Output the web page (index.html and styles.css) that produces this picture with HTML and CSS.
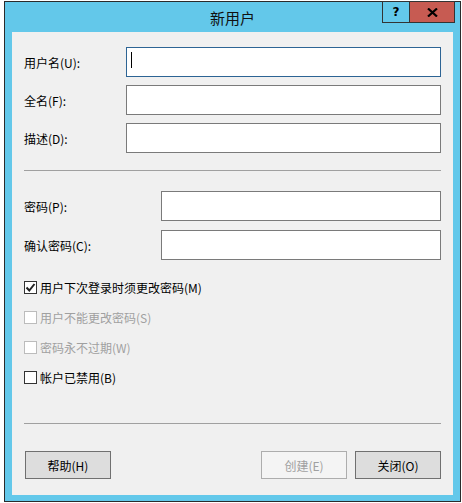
FILE: index.html
```html
<!DOCTYPE html>
<html lang="zh-CN">
<head>
<meta charset="utf-8">
<title>新用户</title>
<link rel="stylesheet" href="styles.css">
</head>
<body>
<div class="window">
  <div class="titlebar">
    <span class="title">新用户</span>
    <div class="caption-btns">
      <div class="cap-help">?</div>
      <div class="cap-close">
        <svg width="11" height="9" viewBox="0 0 11 9"><path d="M1 0.5 L10 8.5 M10 0.5 L1 8.5" stroke="#000" stroke-width="2.2"/></svg>
      </div>
    </div>
  </div>
  <div class="client">
    <div class="row"><label class="lbl">用户名(U):</label><div class="input focused"><span class="caret"></span></div></div>
    <div class="row"><label class="lbl">全名(F):</label><div class="input"></div></div>
    <div class="row"><label class="lbl">描述(D):</label><div class="input"></div></div>
    <div class="sep sep1"></div>
    <div class="row pw"><label class="lbl">密码(P):</label><div class="input"></div></div>
    <div class="row pw pw2"><label class="lbl">确认密码(C):</label><div class="input"></div></div>
    <div class="checks">
      <div class="check"><span class="box"><svg width="11" height="11" viewBox="0 0 11 11"><path d="M1.5 5.5 L4.3 8.5 L9.5 2" fill="none" stroke="#222" stroke-width="2"/></svg></span><span>用户下次登录时须更改密码(M)</span></div>
      <div class="check disabled"><span class="box"></span><span>用户不能更改密码(S)</span></div>
      <div class="check disabled"><span class="box"></span><span>密码永不过期(W)</span></div>
      <div class="check"><span class="box"></span><span>帐户已禁用(B)</span></div>
    </div>
    <div class="sep sep2"></div>
    <div class="buttons">
      <div class="btn">帮助(H)</div>
      <div class="spacer"></div>
      <div class="btn btn-disabled">创建(E)</div>
      <div class="btn">关闭(O)</div>
    </div>
  </div>
</div>
</body>
</html>
```
FILE: styles.css
```css
html, body {
  margin: 0;
  padding: 0;
  background: #ffffff;
}
body {
  font-family: "Noto Sans CJK SC", "Noto Sans", sans-serif;
  font-size: 12px;
  color: #000;
  padding: 1px 0 0 4px;
}
.window {
  position: relative;
  width: 455px;
  height: 499px;
  border: 1px solid #2b2b2b;
  background: #63c8ea;
  display: flex;
  flex-direction: column;
}
.titlebar {
  height: 30px;
  display: flex;
  justify-content: center;
  align-items: center;
}
.title {
  font-size: 15px;
  color: #111;
  margin-top: 1px;
}
.caption-btns {
  position: absolute;
  top: -1px;
  right: 5px;
  display: flex;
  height: 22px;
}
.cap-help {
  width: 26px;
  height: 20px;
  border: 1px solid #333;
  background: #63c8ea;
  font-family: "DejaVu Sans", sans-serif;
  font-weight: bold;
  font-size: 12px;
  display: flex;
  align-items: center;
  justify-content: center;
}
.cap-close {
  width: 44px;
  height: 20px;
  border: 1px solid #333;
  border-left: none;
  background: #c75b52;
  display: flex;
  align-items: center;
  justify-content: center;
}
.client {
  margin: 0 7px;
  width: 417px;
  height: 448px;
  background: #f0f0f0;
  padding: 15px 12px 0 12px;
  display: flex;
  flex-direction: column;
}
.row {
  display: flex;
  align-items: center;
  height: 30px;
  margin-bottom: 8px;
}
.lbl {
  width: 102px;
  flex: none;
}
.pw .lbl {
  width: 137px;
}
.input {
  flex: 1;
  height: 28px;
  border: 1px solid #7a7a7a;
  background: #fff;
  position: relative;
}
.input.focused {
  border-color: #2d6494;
}
.caret {
  position: absolute;
  left: 4px;
  top: 4px;
  width: 1px;
  height: 16px;
  background: #000;
}
.sep {
  height: 1px;
  background: #a0a0a0;
}
.sep1 {
  margin-top: 9px;
  margin-bottom: 20px;
}
.pw {
  margin-bottom: 9px;
}
.pw2 {
  margin-bottom: 12px;
}
.checks {
  display: flex;
  flex-direction: column;
}
.check {
  height: 30px;
  display: flex;
  align-items: center;
}
.box {
  width: 11px;
  height: 11px;
  border: 1px solid #333;
  background: #fff;
  margin-right: 3px;
  display: flex;
  align-items: center;
  justify-content: center;
}
.disabled {
  color: #a0a0a0;
}
.disabled .box {
  border-color: #bcbcbc;
}
.sep2 {
  margin-top: 31px;
}
.buttons {
  margin-top: 27px;
  display: flex;
  gap: 8px;
}
.spacer {
  flex: 1;
}
.btn {
  width: 84px;
  height: 26px;
  border: 1px solid #707070;
  background: #dddddd;
  display: flex;
  align-items: center;
  justify-content: center;
  font-size: 12px;
}
.btn:first-child {
  margin-left: 1px;
}
.btn-disabled {
  background: #f4f4f4;
  border-color: #adadad;
  color: #a0a0a0;
}
```
